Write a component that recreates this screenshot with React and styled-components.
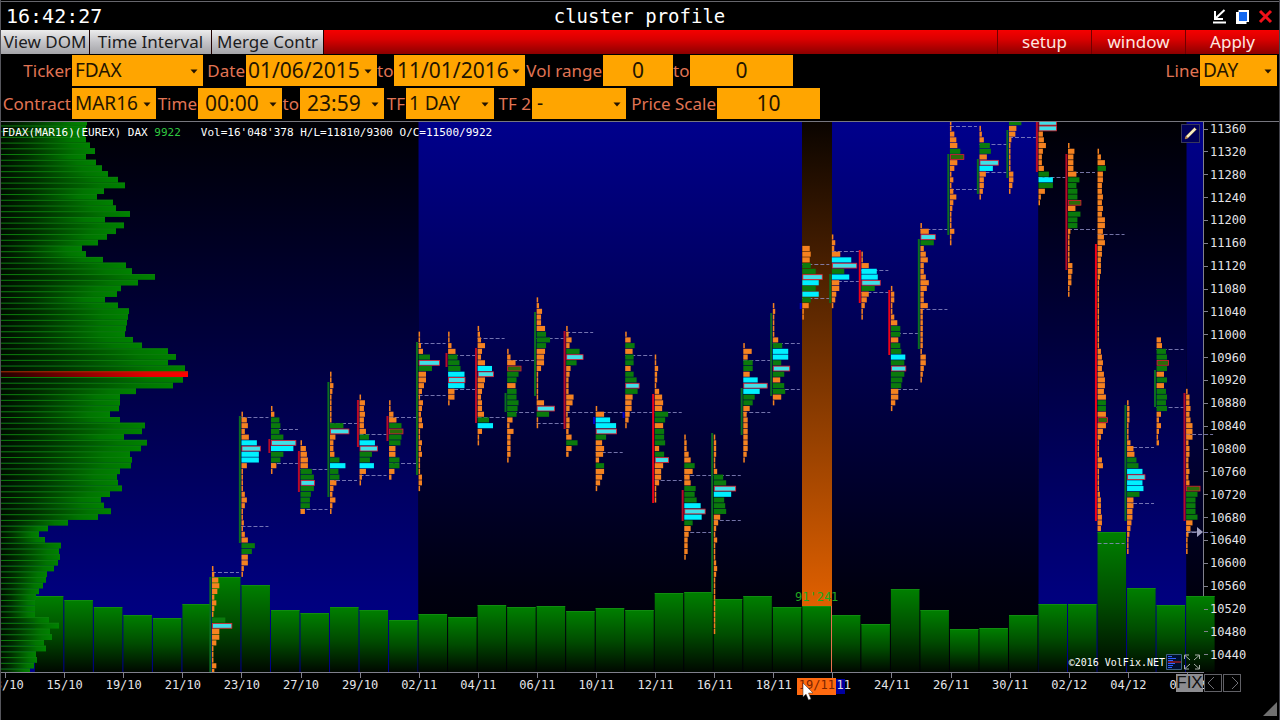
import React from "react";
import styled, { createGlobalStyle } from "styled-components";

const mono = '"DejaVu Sans Mono", "Liberation Mono", monospace';
const sans = '"Noto Sans", "Open Sans", sans-serif';

const Global = createGlobalStyle`
  * { box-sizing: border-box; }
  html, body { margin: 0; background: #000; }
  body { overflow-x: hidden; }
  button, input, select { font: inherit; border: 0; border-radius: 0; outline: 0; margin: 0; }
`;

const Window = styled.div`
  min-height: 100vh;
  display: flex;
  flex-direction: column;
  background: #000;
  color: #fff;
  font-family: ${sans};
  border-left: 1px solid #55555c;
  border-right: 1px solid #44444c;
  padding-top: 1px;
`;

const TitleBar = styled.header`
  height: 29px;
  border-top: 1px solid #66666c;
  display: grid;
  grid-template-columns: 1fr auto 1fr;
  align-items: center;
  padding: 0 6px 0 5px;
  font-family: ${mono};
`;
const Clock = styled.time`
  font-size: 20px;
  line-height: 26px;
`;
const Title = styled.h1`
  margin: 0;
  font-size: 19px;
  line-height: 26px;
  font-weight: 400;
`;
const WindowControls = styled.div`
  display: flex;
  justify-content: flex-end;
  gap: 8px;
`;
const IconButton = styled.button`
  display: flex;
  padding: 0;
  background: none;
  width: 15px;
  height: 15px;
`;

const Toolbar = styled.nav`
  height: 24px;
  display: flex;
  background: linear-gradient(#f60000, #d80000 40%, #8c0000);
`;
const GreyButton = styled.button`
  width: ${(p) => p.$w}px;
  height: 24px;
  padding: 0;
  margin-right: 1px;
  white-space: nowrap;
  font-size: 17px;
  line-height: 24px;
  color: #1c1c20;
  background: linear-gradient(#ececec, #c4c4c8 50%, #a4a4a8);
  box-shadow: 1px 0 0 #200000;
`;
const RedButton = styled.button`
  width: 94px;
  height: 24px;
  padding: 0;
  font-size: 17px;
  line-height: 24px;
  color: #ffe8e0;
  background: none;
  border-left: 1px solid #700000;
`;
const Spacer = styled.div`
  flex: 1;
`;

const Filters = styled.form`
  display: flex;
  flex-direction: column;
  gap: 2px;
  padding: 1px 2px 2px 0;
`;
const FilterRow = styled.div`
  display: flex;
  height: 31px;
`;
const FieldLabel = styled.label`
  width: ${(p) => p.$w}px;
  padding-right: 1px;
  text-align: ${(p) => p.$align || "right"};
  white-space: nowrap;
  font-size: 17px;
  line-height: 31px;
  color: #e07454;
`;
const SelectBox = styled.div`
  position: relative;
  width: ${(p) => p.$w}px;
  height: 31px;
  svg {
    position: absolute;
    right: 5px;
    top: 14px;
    pointer-events: none;
  }
`;
const Select = styled.select`
  appearance: none;
  width: 100%;
  height: 31px;
  padding: 0 0 2px ${(p) => p.$pad || 3}px;
  background: #ffa500;
  color: #231400;
  font-size: ${(p) => (p.$digits ? 21 : 19)}px;
`;
const NumberInput = styled.input`
  width: ${(p) => p.$w}px;
  height: 31px;
  padding: 0 0 2px;
  text-align: center;
  background: #ffa500;
  color: #231400;
  font-size: 21px;
`;

const ChartGrid = styled.main`
  flex: 1;
  display: grid;
  grid-template-columns: minmax(0, 1fr) 75px;
  grid-template-rows: minmax(551px, 1fr) 47px;
  border-top: 1px solid #77777f;
`;
const Plot = styled.section`
  position: relative;
  border-right: 1px solid #80808c;
  border-bottom: 1px solid #80808c;
`;
const PlotSvg = styled.svg`
  position: absolute;
  inset: 0;
  width: 100%;
  height: 100%;
  overflow: visible;
`;
const InfoLine = styled.p`
  position: absolute;
  left: 1px;
  top: 4px;
  margin: 0;
  display: flex;
  gap: 20px;
  white-space: nowrap;
  font: 11px/14px ${mono};
`;
const LastPrice = styled.span`
  color: #30c840;
`;
const ToolButton = styled.button`
  position: absolute;
  right: 3px;
  top: 2px;
  width: 19px;
  height: 19px;
  padding: 1px;
  display: flex;
  background: #00005a;
  border: 1px solid #38385c;
`;
const PlotFooter = styled.div`
  position: absolute;
  right: 2px;
  bottom: 2px;
  display: flex;
  align-items: center;
  gap: 1px;
  font: 10px/16px ${mono};
`;
const Copyright = styled.span`
  padding-top: 3px;
  line-height: 14px;
`;

const PriceAxis = styled.ol`
  list-style: none;
  margin: 0;
  padding: 0 0 11px;
  display: flex;
  flex-direction: column;
  justify-content: space-between;
`;
const PriceTick = styled.li`
  position: relative;
  display: flex;
  align-items: center;
  gap: 2px;
  font: 12px/14px ${mono};
  color: #e4e4e8;
  &::before {
    content: "";
    width: 4px;
    height: 1px;
    background: #80808c;
  }
`;

const DateAxis = styled.div`
  position: relative;
  overflow: hidden;
`;
const DateTrack = styled.ol`
  list-style: none;
  margin: 0 -13px 0 -25px;
  padding: 0;
  display: grid;
  grid-template-columns: repeat(21, minmax(0, 1fr));
`;
const DateTick = styled.li`
  position: relative;
  display: flex;
  flex-direction: column;
  align-items: center;
  font: 12px/14px ${mono};
  color: #e4e4e8;
  &::before {
    content: "";
    width: 1px;
    height: 5px;
    background: #80808c;
  }
`;
const ActiveShade = styled.div`
  position: absolute;
  left: 69%;
  top: 6px;
  width: 14px;
  height: 15px;
  background: #0000a0;
`;
const ActiveDate = styled.div`
  position: absolute;
  left: 66.2%;
  top: 5px;
  width: 39px;
  height: 17px;
  background: #ff6a10;
  color: #7a2400;
  text-align: center;
  font: 12px/15px ${mono};
`;
const Cursor = styled.svg`
  position: absolute;
  left: 66.6%;
  top: 9px;
`;
const Corner = styled.div`
  position: relative;
`;
const AxisButtons = styled.div`
  position: absolute;
  left: -28px;
  top: 1px;
  display: flex;
`;
const FixButton = styled.button`
  width: 27px;
  height: 18px;
  padding: 0;
  background: #8c8c90;
  color: #101010;
  font: 17px/18px "Liberation Sans", sans-serif;
`;
const StepButton = styled.button`
  width: 18px;
  height: 18px;
  padding: 0;
  display: flex;
  margin-left: 1px;
  background: none;
  border: 1px solid #606066;
`;
const Grip = styled.svg`
  position: absolute;
  right: 2px;
  bottom: 4px;
`;

const TOP = 122;
const ROW = 5.717;
const rowY = (k) => 128.3 + ROW * k - ROW / 2;
const colX = (i) => 5.3 + 29.52 * i;

// Profile row lengths, one for each 10 point price level from the top.
const profile = [
  87, 86, 85, 86, 90, 95, 86, 96, 102, 108, 118, 125, 104, 97, 113, 116, 130, 105, 124, 116, 107, 98, 82, 86, 103,
  126, 132, 155, 138, 121, 117, 105, 118, 129, 128, 127, 126, 125, 133, 142, 168, 176, 168, 185, 188, 183, 173, 136,
  120, 120, 119, 110, 120, 145, 142, 124, 147, 141, 130, 132, 131, 120, 117, 118, 122, 110, 101, 104, 111, 98, 68, 48,
  39, 45, 61, 59, 60, 58, 54, 47, 46, 43, 39, 36, 35, 35, 35, 49, 59, 50, 52, 44, 46, 36, 37, 34, 30,
];

// Top of every volume bar, from the second session on.
const volume = [
  596, 600, 607, 615, 618, 604, 577, 585, 610, 613, 607, 610, 620, 614, 617, 605, 607, 606, 611, 608, 610, 593, 592,
  599, 596, 607, 606, 615, 624, 589, 610, 629, 628, 615, 604, 604, 532, 588, 605, 596,
];

// Each session: column, first level, cells, body colour and range, value area lines.
// A cell is a colour letter (upper case = point of control) and a length; "*n" repeats it.
const sessions = [
  [7, 77, "o1 o2 o6 o7 o5 o2 o4 o2 o1 g13 C19 o7 o7 o4 o1*3 o4 o2", "g", 577, 672, [572]],
  [8, 50, "o1 o5 o6 o3 o7 c15 C18 c17 c17 o5 o1*4 o3 o5 o3 o1*2 o2 o1 o3 o6 g13 g10 o6 o6 o2 o1", "g", 416, 543, [417, 526]],
  [9, 49, "o1 o3 g8 g9 g8 g12 C24 c22 g12 g9 o5 o1", "r", 439, 453, [429, 463]],
  [10, 55, "o1 o5 o6 o7 o7 g11 g13 C13 g13 g10 g9 g9 o4", "r", 451, 492, [469, 509]],
  [11, 43, "o1 o1 o3 o2 o1*5 g13 C18 o5 o3 o3 o4 g9 c15 g8 g9 o6 o3 o2 o5 o2 o1", "g", 382, 497, [423, 480]],
  [12, 47, "o1 o5 o4 o5 o4 o4 o6 g9 c15 C17 g12 g10 c14 o6 o2 o1", "r", 400, 447, [434, 475]],
  [13, 48, "o1 o1 o4 o7 g12 G13 g12 g11 o6 o6 g10 g10 o5 o2", "r", 416, 441, [417, 463]],
  [14, 36, "o1 o1 o2 o4 g11 C20 g13 o7 o7 o5 o3 o1 o4 o3 o2 o3 o4 o1*2 o3 o2 o3 o1*3 o3 o3 o1", "g", 342, 475, [343, 395]],
  [15, 36, "o1 o1 o3 o7 g9 g11 g12 c16 C16 c16 o6 o6 o1", "r", 353, 367, [355, 389]],
  [16, 35, "o1 o2 o3 o7 o4 o3 o7 c14 C15 o7 o6 o4 o3 o4 o4 o6 g11 c15 o4 o1 o1", "r", 348, 423, [338, 417]],
  [17, 39, "o1 o3 o8 G13 g11 g9 o8 g9 g9 g11 g10 g9 o5 o2 o6 o3*4 o1", "g", 393, 412, [360, 412]],
  [18, 30, "o1 o2 o5 o4 o4 o8 g9 g13 g9 o8 o7 o7 o4 o1*5 o7 C17 g12 o1 o1", "g", 312, 396, [338, 423]],
  [19, 35, "o1 o2 o5 o3 g13 C16 g10 o4 o3 o2*3 o7 o6 o3 o1 o3 o3 o2 o5 g11 o5 o2", "r", 331, 429, [332, 412]],
  [20, 49, "o1 o8 c14 c20 C20 g10 o6 o8 o7 o3 g8 o8 o6 o4 o1", "b", 417, 424, [412, 452]],
  [21, 36, "o1 o5 g9 o7 g8 g8 o5 g8 g11 C13 g12 o7 o6 o6 o4 o3 o1", "b", 412, 418, [355, 412]],
  [22, 40, "o1 o1 o3 o2 o2 o1 o4 o7 o8 o7 g13 g10 o8 g9 g9 g10 o4 g9 C13 o8 o6 o6 o4 o1*3", "R", 394, 503, [412, 480]],
  [23, 54, "o1 o2 o2 o4 o6 g10 o8 o5 o6 g11 g10 g12 c16 C20 c17 g8 o6 o4 o3*3 o1", "r", 490, 521, [475, 532]],
  [24, 54, "o1 o2*3 o1*2 o3 g9 g12 C21 c17 g10 g11 g12 o6 o4 o2 o1 o3 o1*3 o2 o3 o2 o1*10", "g", 433, 594, [475, 520]],
  [25, 38, "o1 o8 o4 g9 g9 o6 c14 C23 c16 g11 g9 o6 o3 o4*6 o3 o1", "g", 388, 435, [360, 412]],
  [26, 31, "o1 o2 o1*4 o5 g9 c15 c15 g8 C16 g11 o7 g11 g12 o8 o1", "g", 313, 396, [343, 389]],
  [27, 21, "o7 o8 o7 g8 g13 C19 c16 g13 c16 g8 o6 o1 o1", "b", 303, 309, [264, 298]],
  [28, 19, "o1 o3 o2 o8 c19 C24 g12 c17 o7 o7 o4 o3 o1", "g", 274, 303, [251, 281]],
  [29, 22, "o1 o1 o7 c15 c16 C18 g13 o7 o5 o3 o1 o1", "R", 250, 303, [270, 292]],
  [30, 28, "o1 o3 o3 o1 o1 o3 o6 g9 g9 o7 g9 g10 c14 g13 C14 g13 g11 g10 o7 o7 o4 o1", "R", 290, 355, [333, 389]],
  [31, 17, "o1 o8 C14 g13 o3 o5 o7 o3 o3 o5 o8 o6 o3 o3 o7 o2*7 o1 o5 o5 o3 o2 o1", "g", 239, 349, [229, 309]],
  [32, -1, "o1 o1 o4 o6 o7 g10 G13 o7 o4 o1 o3 o1 o3 o6 o3 o2 o1*3 o4 o1 o1", "g", 154, 235, [126, 189]],
  [33, 0, "o1 o2 o4 g10 g11 o7 C18 c13 o6 o4 o4 o3 o1", "g", 159, 194, [144, 172]],
  [34, -1, "g12 o7 o6 o2 o1*5 o4 o4 o3 o1", "g", 130, 178, [137]],
  [35, -1, "C17 C17 o4 o5 o7 o4 o3 o3 o5 g10 c14 g14 o6 o2 o1", "r", 122, 172, [177]],
  [36, 3, "o1 o6 o5 o5 o5 o8 g11 g8 g9 g9 G12 o7 g12 g9 g9 o2 o1*5 o4 o4 o3 o3 o1 o1", "r", 154, 270, [172, 229]],
  [37, 4, "o1 o3 o7 g8 o5 o5 o4 o4 o5 o4 o5 o4 o7 o7 o5 o6 o7 o4 o4 o3*3 o2 o1*12 o3 o4 o5 o4 o6 o7 o7 o6 o8 g8 g8 o8 G9 o8 o5 o3 o1*3 o4 o5 o1*4 o2 o3 o3 o3 o4 o4 o3", "R", 244, 521, [234, 543]],
  [38, 48, "o1 o2 o2 o2 o1*3 o3 o6 o7 g9 g11 c15 C17 c15 c16 g12 o6 o6 o5 o5 o4 o3 o2 o1*3", "g", 405, 521, [447, 503]],
  [39, 37, "o4 o5 g9 g10 G11 g10 o7 g10 o7 g9 g10 g9 g10 o4 o2 o4 o2 o1 o2", "g", 370, 407, [349, 407]],
  [40, 46, "o1 o3 o3 o4 o3 o4 o6 o6 o6 o2 o3 o3 o2 o2 o3 o2 o3 G13 g11 g9 g9 g9 g11 o6 o4 o2 o1*3", "r", 393, 521, [434, 532]],
];

const bodyFill = { g: "#0a6e20", r: "#b80a28", R: "#f00018", b: "#0000d0" };
const cellFill = { o: "#f58220", g: "#0a7a0c", c: "#00f0ff", C: "#40e0e8", G: "#2c6a08" };

const parseCells = (text) =>
  text.split(" ").flatMap((token) => {
    const [cell, times] = token.split("*");
    return Array(Number(times) || 1).fill({ kind: cell[0], w: Number(cell.slice(1)) });
  });

function Session({ data }) {
  const [col, first, text, body, from, to, lines] = data;
  const x = colX(col);
  return (
    <g>
      {lines.map((y) => (
        <path key={y} d={`M${x} ${y + 0.5}h27`} stroke="#9090c8" strokeDasharray="4 2" opacity="0.8" />
      ))}
      <rect x={x - 2.6} y={from} width="2" height={to - from} fill={bodyFill[body]} />
      {parseCells(text).map(({ kind, w }, n) => {
        const poc = kind === "C" || kind === "G";
        return (
          <rect
            key={n}
            x={poc ? x + 0.5 : x}
            y={rowY(first + n) + (poc ? 0.6 : 0.4)}
            width={w === 1 ? 1.5 : w + 0.4}
            height={poc ? 4.8 : 5.1}
            fill={cellFill[kind]}
            stroke={poc ? "#e02030" : "none"}
            strokeWidth="0.8"
          />
        );
      })}
    </g>
  );
}

function ClusterChart() {
  return (
    <PlotSvg viewBox="1 122 1202 550" preserveAspectRatio="none" role="img" aria-label="Cluster profile chart">
      <defs>
        <linearGradient id="rise" x1="0" y1="0" x2="0" y2="1">
          <stop offset="0" stopColor="#000004" />
          <stop offset="0.85" stopColor="#00007c" />
          <stop offset="1" stopColor="#00008c" />
        </linearGradient>
        <linearGradient id="fall" x1="0" y1="0" x2="0" y2="1">
          <stop offset="0" stopColor="#00008c" />
          <stop offset="0.85" stopColor="#000010" />
          <stop offset="1" stopColor="#000004" />
        </linearGradient>
        <linearGradient id="active" x1="0" y1="0" x2="0" y2="1">
          <stop offset="0" stopColor="#0a0400" />
          <stop offset="1" stopColor="#e06000" />
        </linearGradient>
        <linearGradient id="vol" x1="0" y1="0" x2="0" y2="1">
          <stop offset="0" stopColor="#008000" />
          <stop offset="0.5" stopColor="#004c00" />
          <stop offset="1" stopColor="#000800" />
        </linearGradient>
        <linearGradient id="level">
          <stop offset="0" stopColor="#000c00" />
          <stop offset="0.3" stopColor="#002e00" />
          <stop offset="0.8" stopColor="#007400" />
          <stop offset="1" stopColor="#008200" />
        </linearGradient>
        <linearGradient id="poc">
          <stop offset="0" stopColor="#200000" />
          <stop offset="0.8" stopColor="#e80000" />
          <stop offset="1" stopColor="#ff0000" />
        </linearGradient>
        <clipPath id="plotClip">
          <rect x="1" y="122" width="1220" height="550" />
        </clipPath>
      </defs>
      <rect x="1" y={TOP} width="417.500" height="550" fill="url(#rise)" />
      <rect x="418.500" y={TOP} width="620" height="550" fill="url(#fall)" />
      <rect x="1038.500" y={TOP} width="148" height="550" fill="url(#rise)" />
      <rect x="1186.500" y={TOP} width="16.500" height="550" fill="url(#fall)" />
      <rect x="802" y={TOP} width="30" height="484" fill="url(#active)" />
      <g clipPath="url(#plotClip)">
        {volume.map((y, n) => (
          <rect key={n} x={colX(n + 1)} y={y} width="28.5" height={672 - y} fill="url(#vol)" />
        ))}
        {volume.map((y, n) => (
          <rect key={n} x={colX(n + 1)} y={y} width="28.5" height="1" fill="#108c10" />
        ))}
        <rect x="831" y="606" width="1" height="66" fill="#e87050" />
        {profile.map((w, n) => {
          const y = rowY(n - 1);
          const isPoc = n === 44;
          return (
            <g key={n}>
              <rect x="1" y={y} width={w - 1} height={ROW} fill={isPoc ? "url(#poc)" : "url(#level)"} />
              <rect x="1" y={y} width={w - 1} height="1" fill={isPoc ? "#a83000" : "#0c7e0c"} />
            </g>
          );
        })}
        {sessions.map((s) => (
          <Session key={s[0]} data={s} />
        ))}
      </g>
      <path d="M1187 532h10" stroke="#a0a0c0" />
      <path d="M1197 527l6 5-6 5z" fill="#a0a0c0" />
      <text x="795" y="601" fill="#20a820" fontFamily={mono} fontSize="12">
        91'241
      </text>
    </PlotSvg>
  );
}

function Dropdown({ id, w, pad, digits, value }) {
  return (
    <SelectBox $w={w}>
      <Select id={id} $pad={pad} $digits={digits} defaultValue={value}>
        <option>{value}</option>
      </Select>
      <svg width="8" height="5" viewBox="0 0 8 5" aria-hidden="true">
        <path d="M0.5 0.5h7L4 4.5z" fill="#231400" />
      </svg>
    </SelectBox>
  );
}

const dates = [
  "13/10", "15/10", "19/10", "21/10", "23/10", "27/10", "29/10", "02/11", "04/11", "06/11", "10/11", "12/11",
  "16/11", "18/11", "20/11", "24/11", "26/11", "30/11", "02/12", "04/12", "08/12",
];
const prices = Array.from({ length: 24 }, (_, n) => 11360 - n * 40);

export default function App() {
  return (
    <Window>
      <Global />
      <TitleBar>
        <Clock>16:42:27</Clock>
        <Title>cluster profile</Title>
        <WindowControls>
          <IconButton aria-label="Minimize">
            <svg width="15" height="15" viewBox="0 0 15 15" fill="none" stroke="#fff" strokeWidth="2">
              <path d="M12.5 1L4 9M3 2v8h8M1 13.500h13" />
            </svg>
          </IconButton>
          <IconButton aria-label="Maximize">
            <svg width="15" height="15" viewBox="0 0 15 15">
              <path d="M3.500 1H14v12h-2.500v2H1V3h2.500z" fill="#fff" />
              <path d="M4 3h8v9H4z" fill="#1468f0" />
            </svg>
          </IconButton>
          <IconButton aria-label="Close">
            <svg width="15" height="15" viewBox="0 0 15 15" stroke="#f01018" strokeWidth="3">
              <path d="M2 2l11 11M13 2L2 13" />
            </svg>
          </IconButton>
        </WindowControls>
      </TitleBar>
      <Toolbar>
        <GreyButton $w={88}>View DOM</GreyButton>
        <GreyButton $w={121}>Time Interval</GreyButton>
        <GreyButton $w={111}>Merge Contr</GreyButton>
        <Spacer />
        <RedButton>setup</RedButton>
        <RedButton>window</RedButton>
        <RedButton>Apply</RedButton>
      </Toolbar>
      <Filters>
        <FilterRow>
          <FieldLabel $w={71} htmlFor="ticker">Ticker</FieldLabel>
          <Dropdown id="ticker" w={131} value="FDAX" />
          <FieldLabel $w={43} htmlFor="from">Date</FieldLabel>
          <Dropdown id="from" w={131} pad={2} digits value="01/06/2015" />
          <FieldLabel $w={17} htmlFor="until">to</FieldLabel>
          <Dropdown id="until" w={131} digits value="11/01/2016" />
          <FieldLabel $w={78} htmlFor="volMin">Vol range</FieldLabel>
          <NumberInput id="volMin" $w={70} defaultValue="0" />
          <FieldLabel $w={17} htmlFor="volMax">to</FieldLabel>
          <NumberInput id="volMax" $w={103} defaultValue="0" />
          <Spacer />
          <FieldLabel $w={50} htmlFor="line">Line</FieldLabel>
          <Dropdown id="line" w={77} value="DAY" />
        </FilterRow>
        <FilterRow>
          <FieldLabel $w={71} htmlFor="contract">Contract</FieldLabel>
          <Dropdown id="contract" w={84} value="MAR16" />
          <FieldLabel $w={42} htmlFor="timeFrom">Time</FieldLabel>
          <Dropdown id="timeFrom" w={84} pad={7} digits value="00:00" />
          <FieldLabel $w={18} htmlFor="timeTo">to</FieldLabel>
          <Dropdown id="timeTo" w={84} pad={7} digits value="23:59" />
          <FieldLabel $w={22} htmlFor="tf">TF</FieldLabel>
          <Dropdown id="tf" w={88} value="1 DAY" />
          <FieldLabel $w={38} htmlFor="tf2">TF 2</FieldLabel>
          <Dropdown id="tf2" w={94} pad={5} value="-" />
          <FieldLabel $w={91} htmlFor="scale">Price Scale</FieldLabel>
          <NumberInput id="scale" $w={103} defaultValue="10" />
        </FilterRow>
      </Filters>
      <ChartGrid>
        <Plot>
          <ClusterChart />
          <InfoLine>
            <span>
              FDAX(MAR16)(EUREX) DAX <LastPrice>9922</LastPrice>
            </span>
            <span>Vol=16'048'378 H/L=11810/9300 O/C=11500/9922</span>
          </InfoLine>
          <ToolButton aria-label="Draw">
            <svg width="15" height="15" viewBox="0 0 15 15">
              <path d="M2 13l1-3 8.500-8.500 2 2L5 12z" fill="#f4ecc0" stroke="#806030" strokeWidth="0.500" />
              <path d="M2 13l1-3 2 2z" fill="#c08040" />
            </svg>
          </ToolButton>
          <PlotFooter>
            <Copyright>©2016 VolFix.NET</Copyright>
            <svg width="16" height="16" viewBox="0 0 16 16">
              <path d="M0.500 0.500h15v15h-15z" fill="#001030" stroke="#406080" />
              <path d="M2 2.500h4M2 4.500h8M2 6.500h5M2 9.500h7M2 11.500h5M2 13.500h4" stroke="#3060ff" />
              <path d="M2 8h13" stroke="#e02020" />
            </svg>
            <svg width="18" height="16" viewBox="0 0 18 16" fill="none" stroke="#a8b0a8">
              <path d="M7 6L2 1.500M6 1H1.500v4M11 6l5-4.500M12 1h4.500v4M7 10l-5 4.500M6 15H1.500v-4M11 10l5 4.500M12 15h4.500v-4" />
            </svg>
          </PlotFooter>
        </Plot>
        <PriceAxis>
          {prices.map((p) => (
            <PriceTick key={p}>{p}</PriceTick>
          ))}
        </PriceAxis>
        <DateAxis>
          <ActiveShade />
          <DateTrack>
            {dates.map((d) => (
              <DateTick key={d}>{d}</DateTick>
            ))}
          </DateTrack>
          <ActiveDate>19/11</ActiveDate>
          <Cursor width="13" height="20" viewBox="0 0 13 20" aria-hidden="true">
            <path d="M1 1v14l3-3 2.500 6 2.500-1-2.500-6H11z" fill="#fff" stroke="#333" strokeWidth="0.500" />
          </Cursor>
        </DateAxis>
        <Corner>
          <AxisButtons>
            <FixButton>FIX</FixButton>
            <StepButton aria-label="Previous">
              <svg width="16" height="16" viewBox="0 0 16 16" fill="none" stroke="#707076">
                <path d="M9 2L3 8l6 6" />
              </svg>
            </StepButton>
            <StepButton aria-label="Next">
              <svg width="16" height="16" viewBox="0 0 16 16" fill="none" stroke="#707076">
                <path d="M8 2l6 6-6 6" />
              </svg>
            </StepButton>
          </AxisButtons>
          <Grip width="14" height="14" viewBox="0 0 14 14" aria-hidden="true">
            <path d="M14 0v14H0z" fill="#707070" />
          </Grip>
        </Corner>
      </ChartGrid>
    </Window>
  );
}
